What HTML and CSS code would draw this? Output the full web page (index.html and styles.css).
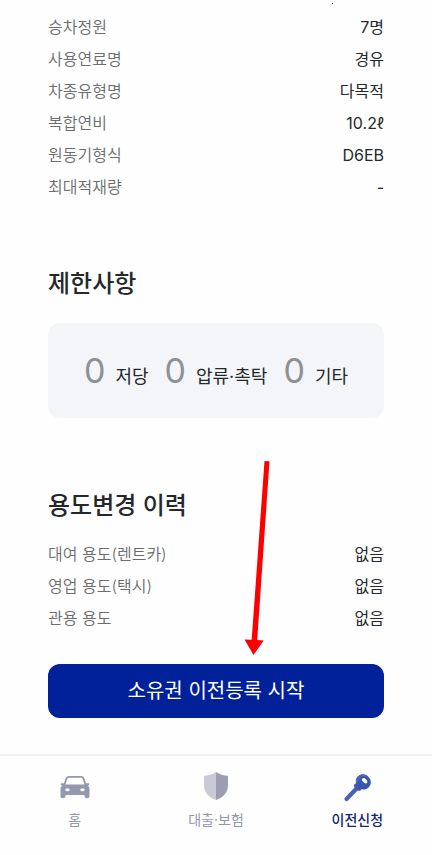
FILE: index.html
```html
<!DOCTYPE html>
<html lang="ko">
<head>
<meta charset="utf-8">
<meta name="viewport" content="width=device-width, initial-scale=1">
<title>이전신청</title>
<link rel="stylesheet" href="styles.css">
</head>
<body>
<main class="content">
  <span class="speck"></span>
  <dl class="specs">
    <div class="row"><dt>승차정원</dt><dd>7명</dd></div>
    <div class="row"><dt>사용연료명</dt><dd>경유</dd></div>
    <div class="row"><dt>차종유형명</dt><dd>다목적</dd></div>
    <div class="row"><dt>복합연비</dt><dd>10.2ℓ</dd></div>
    <div class="row"><dt>원동기형식</dt><dd>D6EB</dd></div>
    <div class="row"><dt>최대적재량</dt><dd>-</dd></div>
  </dl>

  <section class="limits-section">
    <h2>제한사항</h2>
    <ul class="limits">
      <li><span class="count">0</span><span>저당</span></li>
      <li><span class="count">0</span><span>압류·촉탁</span></li>
      <li><span class="count">0</span><span>기타</span></li>
    </ul>
  </section>

  <section class="usage-section">
    <h2>용도변경 이력</h2>
    <dl class="specs">
      <div class="row"><dt>대여 용도(렌트카)</dt><dd>없음</dd></div>
      <div class="row"><dt>영업 용도(택시)</dt><dd>없음</dd></div>
      <div class="row"><dt>관용 용도</dt><dd>없음</dd></div>
    </dl>
  </section>

  <div class="action">
    <button class="primary" type="button">소유권 이전등록 시작</button>
    <svg class="arrow" width="30" height="196" viewBox="0 0 30 196" aria-hidden="true">
      <path d="M20.500 2 25.500 2.200 13.200 181 19.700 181.500 9.500 196 .5 180.400 7.700 180.800Z" fill="#fe0000"/>
    </svg>
  </div>
</main>

<nav class="tabs">
  <a href="#home">
    <svg width="32" height="32" viewBox="0 0 32 32" aria-hidden="true">
      <path fill="#9498ad" fill-rule="evenodd" d="M10.500 6h11c2.400 0 3.500 1 4.200 3l1.300 4.200h2.300c1.300 0 1.400 1.700.3 2l-.9.300c1.300 1 1.800 2.300 1.800 3.800V26c0 3-5 3-5 0v-1H6.500v1c0 3-5 3-5 0v-6.700c0-1.500.5-2.800 1.800-3.800l-.9-.3c-1.100-.3-1-2 .3-2H5L6.300 9c.7-2 1.800-3 4.200-3ZM10.800 7.800c-1.700 0-2.300.6-2.800 2L6.500 14.500h19L24 9.800c-.5-1.400-1.100-2-2.800-2Z"/>
      <ellipse cx="8.500" cy="19.800" rx="2.200" ry="1.500" fill="#fff"/>
      <ellipse cx="23.500" cy="19.800" rx="2.200" ry="1.500" fill="#fff"/>
    </svg>
    <span>홈</span>
  </a>
  <a href="#loan">
    <svg width="32" height="32" viewBox="0 0 32 32" aria-hidden="true">
      <path fill="#c8cbd5" d="M16 2C12.500 4.500 8 5.500 4 5.800V15c0 7.500 5 12.500 12 15Z"/>
      <path fill="#9a9eb0" d="M16 2c3.500 2.500 8 3.500 12 3.800V15c0 7.500-5 12.500-12 15Z"/>
    </svg>
    <span>대출·보험</span>
  </a>
  <a href="#transfer" class="current" aria-current="page">
    <svg width="32" height="32" viewBox="0 0 32 32" aria-hidden="true">
      <path d="M18 16 5.500 29" stroke="#4862b6" stroke-width="4.200" stroke-linecap="round"/>
      <path fill="#3f59ae" d="M14.500 13.500c-2 .5-2 3-.5 4.500l2 2c1.500 1.500 4 1 4.500-1Z"/>
      <path fill="#3b56ad" d="M15 10c1-5 7-7 11.500-4 4 3 4.300 8 1.500 11-3 3.300-8 3.300-10.800.6C15 15.500 14.500 13 15 10Z"/>
      <path fill="#4c66b8" d="M15 10c1-5 7-7 11.500-4l-1 1c-3-1.500-6.500-.5-7.500 4l-3 2Z"/>
      <ellipse cx="23.600" cy="10.700" rx="3.200" ry="1.900" transform="rotate(45 23.600 10.700)" fill="#fff"/>
    </svg>
    <span>이전신청</span>
  </a>
</nav>
</body>
</html>
```

FILE: styles.css
```css
* {
  box-sizing: border-box;
}

body {
  margin: 0;
  min-height: 100vh;
  display: flex;
  flex-direction: column;
  background: #fefefe;
  color: #25282b;
  font-family: Inter, "Noto Sans CJK KR", sans-serif;
  font-size: 16px;
  line-height: 32px;
}

dl,
dd,
ul,
h2 {
  margin: 0;
  padding: 0;
}

.content {
  position: relative;
  padding: 11px 48px 36px;
}

.speck {
  position: absolute;
  top: 3px;
  right: 99px;
  width: 1px;
  height: 1px;
  background: #000;
}

.row {
  display: flex;
  justify-content: space-between;
}

.row dt {
  color: #6a6c6f;
  font-weight: 350;
}

h2 {
  font-size: 24px;
  line-height: 32px;
  font-weight: 500;
}

.limits-section {
  margin-top: 65px;
}

.usage-section {
  margin-top: 72px;
}

.limits {
  display: flex;
  flex-wrap: wrap;
  justify-content: center;
  gap: 16px;
  margin-top: 23px;
  padding: 24px 0;
  border-radius: 12px;
  background: #f4f5f8;
  list-style: none;
  font-size: 18px;
  line-height: 32px;
}

.limits li {
  display: flex;
  align-items: baseline;
  gap: 10px;
}

.count {
  color: #8f9193;
  font-size: 34px;
  line-height: 47px;
}

.usage-section .specs {
  margin-top: 16px;
}

.action {
  position: relative;
  margin-top: 30px;
}

.primary {
  display: block;
  width: 100%;
  padding: 12px;
  border: 0;
  border-radius: 12px;
  background: #002199;
  color: #fff;
  font: inherit;
  font-size: 20px;
  line-height: 30px;
}

.arrow {
  position: absolute;
  top: -205px;
  left: 196px;
}

.tabs {
  flex: 1;
  display: flex;
  padding: 14px 4px;
  border-top: 2px solid #f2f2f2;
}

.tabs a {
  flex: 1;
  display: flex;
  flex-direction: column;
  align-items: center;
  gap: 6px;
  color: #9498a8;
  font-size: 14px;
  line-height: 24px;
  text-decoration: none;
}

.tabs svg {
  fill: none;
}

.tabs .current {
  color: #12266f;
  font-weight: 500;
}
```
